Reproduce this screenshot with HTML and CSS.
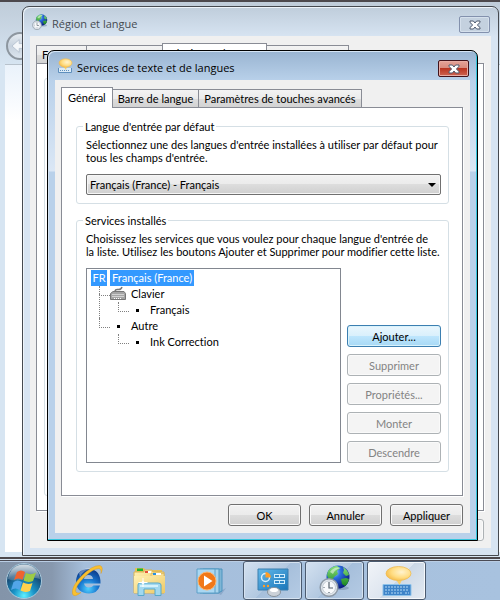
FILE: index.html
```html
<!DOCTYPE html>
<html lang="fr">
<head>
<meta charset="utf-8">
<title>Services de texte et de langues</title>
<link rel="stylesheet" href="styles.css">
</head>
<body>
<svg class="defs" width="0" height="0" aria-hidden="true">
  <defs>
    <radialGradient id="sea" cx="35%" cy="28%" r="75%"><stop offset="0" stop-color="#a9d8ff"/><stop offset=".35" stop-color="#2c6fe0"/><stop offset="1" stop-color="#0a1a7c"/></radialGradient>
    <linearGradient id="land" x1="0" y1="0" x2="0" y2="1"><stop offset="0" stop-color="#8be07c"/><stop offset="1" stop-color="#18851f"/></linearGradient>
    <radialGradient id="bubble" cx="62%" cy="40%" r="65%"><stop offset="0" stop-color="#fff3cf"/><stop offset=".6" stop-color="#ffdd83"/><stop offset="1" stop-color="#f6bd4c"/></radialGradient>
    <symbol id="globe-clock" viewBox="0 0 32 32">
      <ellipse cx="21" cy="23" rx="9" ry="2" fill="#6a86a8" opacity=".5"/>
      <circle cx="19" cy="12" r="11.5" fill="url(#sea)"/>
      <path d="M9 6q4-5 9-5l3 2-3 3 1 3-4 3-2 4-3-1-2-5zM24 2q5 3 6 8l-3 1-3-3 1-3zM22 14l5-1 3 1q-1 5-4 7l-3-2z" fill="url(#land)"/>
      <path d="M11 7q4-6 11-4-6 1-8 6z" fill="#fff" opacity=".5"/>
      <circle cx="10" cy="22.500" r="8.800" fill="#e3e8ed" stroke="#8d99a6" stroke-width="1.500"/>
      <circle cx="10" cy="22.500" r="6.500" fill="#f7f9fb" stroke="#c3ccd4"/>
      <path d="M10 17v6h4M10 27v1M4.500 22.500h1" fill="none" stroke="#55616d" stroke-width="1.200"/>
    </symbol>
    <symbol id="speech-keyboard" viewBox="0 0 32 32">
      <path d="M2 19.500h28v11H2z" fill="#3d83c8" stroke="#8fc3ea"/>
      <path d="M4 22h24M4 25h24M4 28h4M10 28h12M24 28h4" stroke="#b5dcf5" stroke-width="1.200" stroke-dasharray="2 1"/>
      <path d="M14 13h8l-3.500 7z" fill="#f7cd69"/>
      <ellipse cx="17.500" cy="8.500" rx="12.500" ry="7" fill="url(#bubble)" stroke="#eebb55" stroke-width=".8"/>
    </symbol>
    <symbol id="speech-keyboard-small" viewBox="0 0 16 16">
      <path d="M1.500 10v4.500h13V10" fill="#dcebf7" stroke="#5f8fbd"/>
      <path d="M3 12.500h10" stroke="#5f8fbd" stroke-dasharray="1 1"/>
      <path d="M6 8h4l-1 4z" fill="#f7cd69"/>
      <ellipse cx="8.500" cy="5" rx="6.500" ry="4.200" fill="url(#bubble)" stroke="#eebb55" stroke-width=".6"/>
    </symbol>
    <symbol id="cross" viewBox="0 0 12 10">
      <path d="M1 1h3.400L6 3 7.600 1H11v1.500L8.300 5 11 7.500V9H7.600L6 7 4.400 9H1V7.500L3.700 5 1 2.500z" fill="#fff" stroke="#4f5a6e" stroke-width="1"/>
    </symbol>
  </defs>
</svg>

<main class="desktop">
  <div class="window explorer">
    <div class="explorer-page"></div>
    <button class="nav-back" type="button" aria-label="Retour"><svg viewBox="0 0 30 30"><path d="M14 7L5 15l9 8v-5h10v-6H14z" fill="#f4f7fa" stroke="#b0bdcc"/></svg></button>
  </div>

  <section class="window region">
    <header class="titlebar">
      <svg class="title-icon"><use href="#globe-clock"/></svg>
      <h2 class="title">Région et langue</h2>
      <button class="close" type="button" aria-label="Fermer"><svg><use href="#cross"/></svg></button>
    </header>
    <div class="client">
      <div class="tabs">
        <button class="tab" type="button">Formats</button>
        <button class="tab" type="button">Emplacement</button>
        <button class="tab active" type="button">Claviers et langues</button>
        <button class="tab" type="button">Administration</button>
      </div>
      <div class="page"><div class="empty-group"></div></div>
      <div class="actions"><button class="button" type="button" disabled></button></div>
    </div>
  </section>

  <section class="window services">
    <header class="titlebar">
      <svg class="title-icon"><use href="#speech-keyboard-small"/></svg>
      <h1 class="title">Services de texte et de langues</h1>
      <button class="close" type="button" aria-label="Fermer"><svg><use href="#cross"/></svg></button>
    </header>
    <div class="client">
      <div class="tabs">
        <button class="tab active" type="button">Général</button>
        <button class="tab" type="button">Barre de langue</button>
        <button class="tab" type="button">Paramètres de touches avancés</button>
      </div>
      <div class="page">
        <fieldset class="group">
          <legend>Langue d'entrée par défaut</legend>
          <label class="hint" for="lang">Sélectionnez une des langues d'entrée installées à utiliser par défaut pour tous les champs d'entrée.</label>
          <div class="combo">
            <select id="lang"><option>Français (France) - Français</option></select>
          </div>
        </fieldset>
        <fieldset class="group">
          <legend>Services installés</legend>
          <p class="hint">Choisissez les services que vous voulez pour chaque langue d'entrée de la&nbsp;liste. Utilisez les boutons Ajouter et Supprimer pour modifier cette liste.</p>
          <div class="installed">
            <ul class="tree">
              <li>
                <div class="node selected"><span class="badge">FR</span><span class="name">Français (France)</span></div>
                <ul>
                  <li>
                    <div class="node">
                      <svg class="glyph" viewBox="0 0 16 16"><path d="M5 6q0-3 3-2.500T12 1" fill="none" stroke="#777" stroke-width="1.500"/><path d="M3 5.500h11l1.500 2v6h-15v-6z" fill="#a5a5a5" stroke="#777"/><path d="M2.500 8.500h11M2.500 10.500h11M4 12.500h8" stroke="#fff" stroke-dasharray="1 1"/></svg>
                      <span class="name">Clavier</span>
                    </div>
                    <ul><li><div class="node"><span class="glyph dot"></span><span class="name">Français</span></div></li></ul>
                  </li>
                  <li>
                    <div class="node"><span class="glyph dot"></span><span class="name">Autre</span></div>
                    <ul><li><div class="node"><span class="glyph dot"></span><span class="name">Ink Correction</span></div></li></ul>
                  </li>
                </ul>
              </li>
            </ul>
            <div class="commands">
              <button class="button hot" type="button">Ajouter...</button>
              <button class="button" type="button" disabled>Supprimer</button>
              <button class="button" type="button" disabled>Propriétés...</button>
              <button class="button" type="button" disabled>Monter</button>
              <button class="button" type="button" disabled>Descendre</button>
            </div>
          </div>
        </fieldset>
      </div>
      <div class="actions">
        <button class="button" type="button">OK</button>
        <button class="button" type="button">Annuler</button>
        <button class="button" type="button">Appliquer</button>
      </div>
    </div>
  </section>
</main>

<nav class="taskbar">
  <button class="start" type="button" aria-label="Démarrer">
    <svg viewBox="0 0 38 38">
      <defs>
        <radialGradient id="orb" cx="50%" cy="92%" r="85%"><stop offset="0" stop-color="#5ff0ff"/><stop offset=".35" stop-color="#1a94c8"/><stop offset=".75" stop-color="#174d78"/><stop offset="1" stop-color="#4e7390"/></radialGradient>
        <linearGradient id="shine" x1="0" y1="0" x2="0" y2="1"><stop offset="0" stop-color="#fff" stop-opacity=".75"/><stop offset="1" stop-color="#fff" stop-opacity=".15"/></linearGradient>
      </defs>
      <circle cx="19" cy="19" r="17.500" fill="url(#orb)" stroke="#a9c9dc"/>
      <path d="M3 17Q5 3 19 2.500 33 3 35 17q-8-3-16 0-9 3-16 0z" fill="url(#shine)"/>
      <path d="M12 10q4-3 8 0l-2.500 8q-4-3-8.500 0z" fill="#ee6430"/>
      <path d="M21 11q5 2.500 10-.5L28 19q-5 2-9.500-.500z" fill="#9ccb45"/>
      <path d="M8.500 20q4-3 8.500 0l-2.500 8q-4-3-8.500 0z" fill="#52a5e8"/>
      <path d="M18 20.500q5 2.500 9.500.5L25 29q-5 2-9.500-.500z" fill="#ffd14d"/>
    </svg>
  </button>
  <button class="task" type="button" aria-label="Internet Explorer">
    <svg viewBox="0 0 32 32">
      <defs><radialGradient id="ie" cx="50%" cy="80%" r="75%"><stop offset="0" stop-color="#4fd0ff"/><stop offset=".5" stop-color="#1a78d0"/><stop offset="1" stop-color="#0b3f91"/></radialGradient></defs>
      <path fill="url(#ie)" fill-rule="evenodd" d="M17 4C26 4 30 10 29.500 18.500H13q1 4 5 4 3 0 4.500-2h6.500Q26.500 28.500 18 28.500 5.500 28 5 16.500 5.500 4.500 17 4zM13 14h9q-.5-4-4.500-4T13 14z"/>
      <path d="M8 8Q14 1.500 21 4q-8 0-12 8z" fill="#fff" opacity=".35"/>
      <path d="M10 27.500Q3 33 1.500 29 0 22 10 11.500 21 0 29 .5q4 1.500 1 8 .5-5-2.500-5-6 .5-14 8.500Q4.500 21 4.500 26q.5 3 5.500 1.500z" fill="#f9c02f" stroke="#d99518" stroke-width=".4"/>
    </svg>
  </button>
  <button class="task" type="button" aria-label="Explorateur Windows">
    <svg viewBox="0 0 32 32">
      <defs><linearGradient id="folder" x1="0" y1="0" x2="1" y2="1"><stop offset="0" stop-color="#fff1b4"/><stop offset="1" stop-color="#eec864"/></linearGradient></defs>
      <path d="M2 3h9l1.500 2H29v22H2z" fill="#e6bf5d"/>
      <path d="M4 3.500h6v2.500H4z" fill="#1db52c"/>
      <path d="M1 7h10V5h8l1 2h11v21H1z" fill="url(#folder)" stroke="#d9b357"/>
      <path d="M12 6h6v2h-6z" fill="#fff"/><path d="M12 6h3v2h-3z" fill="#e5523b"/>
      <path d="M18 8.500h13V28H18z" fill="#f6dc90" stroke="#dab65c" stroke-width=".7"/><path d="M20 8h8v2h-8z" fill="#fff"/><path d="M20 8h3v2h-3z" fill="#268fe2"/>
      <path d="M1 11h31v17H1z" fill="url(#folder)"/>
      <path d="M5 30.500V20q0-2 2-2h18q3 0 3 2v10.500h-6V24H11v6.500z" fill="#a2d8ee" stroke="#57a8cc"/>
      <path d="M7 20h18v2H7z" fill="#d4f1fb"/>
      <path d="M10 13v9M5.500 17.500h9" stroke="#fff"/><circle cx="10" cy="17.500" r="1.500" fill="#fff"/>
    </svg>
  </button>
  <button class="task" type="button" aria-label="Lecteur Windows Media">
    <svg viewBox="0 0 32 32">
      <path d="M22 28l9-5-5 7z" fill="#6f92b8" opacity=".5"/>
      <path d="M8 4h19v22l-4 2H8z" fill="#7eb5d5" stroke="#4c94bf"/><path d="M5 4h19v24H5z" fill="#a8d4ec" stroke="#5599c2"/>
      <path d="M2 4h18v24H2z" fill="#a9d7f2" stroke="#5d9fc7"/>
      <circle cx="12" cy="16" r="9" fill="#f07818" stroke="#ffb46c"/><path d="M9 10.500l8.500 5.500L9 21.500z" fill="#fff"/>
    </svg>
  </button>
  <button class="task open" type="button" aria-label="Panneau de configuration">
    <svg viewBox="0 0 32 32">
      <defs><linearGradient id="panel" x1="0" y1="0" x2="1" y2="1"><stop offset="0" stop-color="#64b9ea"/><stop offset="1" stop-color="#1976ba"/></linearGradient></defs>
      <path d="M1 4h30v21H1z" fill="url(#panel)" stroke="#3a7eae"/>
      <circle cx="8.500" cy="12.500" r="4" fill="none" stroke="#d9f0fc" stroke-width="1.500"/><path d="M8.500 12.500V7q5 .5 5.500 5.500z" fill="#ff9d26"/>
      <path d="M17 9h11v4H17zM17 15h11v4H17z" fill="#d1edfb"/><path d="M18 10h4v2h-4zM23 10h4v2h-4zM18 16h4v2h-4zM23 16h4v2h-4z" fill="#348ac7"/>
      <circle cx="7" cy="21" r="1.200" fill="#ff9d26"/><circle cx="11" cy="21" r="1.200" fill="#ff9d26"/>
      <ellipse cx="17" cy="27" rx="6.500" ry="4.500" fill="#cbd1d8" stroke="#87919b"/><ellipse cx="17" cy="25" rx="4" ry="2" fill="#fff"/>
    </svg>
  </button>
  <button class="task open" type="button" aria-label="Région et langue"><svg><use href="#globe-clock"/></svg></button>
  <button class="task open current" type="button" aria-label="Services de texte et de langues"><svg><use href="#speech-keyboard"/></svg></button>
</nav>
</body>
</html>
```
FILE: styles.css
```css
* { box-sizing: border-box; }

body {
  margin: 0;
  min-height: 100vh;
  display: flex;
  flex-direction: column;
  background: #d7e5f2;
  color: #000;
  font: 11px/13px Lato, "Liberation Sans", sans-serif;
  font-variant-ligatures: none;
}

button, select { font: inherit; font-variant-ligatures: none; color: inherit; margin: 0; padding: 0; }
ul { list-style: none; margin: 0; padding: 0; }
.defs { position: absolute; }

/* Desktop and its windows */
.desktop {
  position: relative;
  flex: 1;
  display: grid;
  overflow: hidden;
}

.window { border: 1px solid #45494f; }

.explorer {
  position: absolute;
  inset: 0 -8px 1px -1px;
  border-width: 2px 1px;
  border-color: #4c484c;
  background: linear-gradient(#bfccd9, #d7e5f2 64px);
}

.explorer-page {
  position: absolute;
  inset: 62px 6px 5px 5px;
  border-top: 1px solid #b8c2cc;
  background: linear-gradient(#eaf2fb, #fff 56px);
}

.nav-back {
  position: absolute;
  top: 30px;
  left: 6px;
  width: 28px;
  height: 28px;
  border: 2px solid #8d969f;
  border-radius: 50%;
  background: linear-gradient(#e5ebf1, #c7d2de 50%, #dce5ee);
}
.nav-back svg { display: block; width: 24px; height: 24px; }

.region {
  position: absolute;
  inset: 6px 1px 4px 22px;
  display: flex;
  flex-direction: column;
  border-radius: 7px 7px 0 0;
  background: linear-gradient(#bfcddb, #d7e4f2 30px);
  box-shadow: inset 1px 1px #eef4fa;
}

.services {
  position: relative;
  margin: 50px 22px 18px 47px;
  border-color: #000;
  border-radius: 7px 7px 0 0;
  background: linear-gradient(#99b4d1, #b9d1ea 30px, #dbe7f5 120px, #b9d1ea 121px);
  box-shadow: inset -1px -1px #35c5dc, inset 1px 1px #d5e5f5;
  align-self: start;
}

.titlebar {
  height: 29px;
  padding: 0 8px 0 9px;
  display: flex;
  align-items: center;
  gap: 4px;
}
.title-icon { width: 16px; height: 16px; }
.title {
  flex: 1;
  margin: 0;
  padding-top: 5px;
  font: 11px/16px "Open Sans", "Noto Sans", sans-serif;
}
.region .title { color: #454b52; }

.close {
  width: 31px;
  height: 17px;
  display: grid;
  place-items: center;
  align-self: end;
  margin-bottom: 3px;
  border: 1px solid #8391ad;
  border-radius: 2px;
  background: #c4d1df;
  box-shadow: inset 0 0 0 1px #d5e0ec;
}
.close svg { width: 12px; height: 10px; }
.services .close {
  border-color: #42131b;
  background: linear-gradient(#e5a398, #d88a7d 48%, #ba3521 50%, #cd6552);
  box-shadow: inset 0 0 0 1px #e7aca3;
}

.client {
  margin: 0 7px 7px;
  padding: 7px 7px 7px 6px;
  background: #f0f0f0;
}
.region .client { flex: 1; display: flex; flex-direction: column; }

/* Tabs */
.tabs {
  display: flex;
  align-items: flex-end;
  height: 20px;
}
.tab {
  height: 18px;
  padding: 0 5px;
  border: 1px solid #898c95;
  border-bottom: 0;
  background: linear-gradient(#f3f3f3, #ebebeb 50%, #dddddd 51%, #d3d3d3);
  white-space: nowrap;
}
.tab + .tab { margin-left: -1px; }
.tab.active {
  position: relative;
  height: 21px;
  margin-bottom: -1px;
  padding: 0 6px 2px;
  background: #fff;
}

.page {
  padding: 12px 13px 23px 14px;
  border: 1px solid #898c95;
  background: #fff;
  box-shadow: 1px 1px #fff;
}
.region .page { flex: 1; padding: 14px 7px; }
.empty-group { height: 100%; border: 1px solid #d5dfe5; border-radius: 3px; }

/* Group boxes */
.group {
  min-width: 0;
  margin: 0;
  padding: 5px 7px 8px 9px;
  border: 1px solid #d5dfe5;
  border-radius: 3px;
}
.group + .group { margin-top: 10px; }
.group legend { margin-left: -3px; padding: 0 2px; }
.hint { display: block; margin: 0 0 10px; }

.combo { position: relative; }
.combo::after {
  content: "";
  position: absolute;
  top: 9px;
  right: 5px;
  border: 4px solid transparent;
  border-top-color: #000;
  border-bottom: 0;
  pointer-events: none;
}
.combo select {
  display: block;
  width: 100%;
  height: 21px;
  padding: 0 16px 0 3px;
  appearance: none;
  border: 1px solid #707070;
  border-radius: 2px;
  background: linear-gradient(#f2f2f2, #ebebeb 49%, #dddddd 50%, #cfcfcf);
  box-shadow: inset 0 0 0 1px #f6f6f6;
}

.installed { display: flex; gap: 6px; }

.tree {
  flex: 1;
  min-height: 195px;
  padding: 1px 4px;
  border: 1px solid #828790;
  background: #fff;
}
.tree ul { padding-left: 19px; }
.tree li { position: relative; }
.tree ul > li::before {
  content: "";
  position: absolute;
  top: 0;
  left: -11px;
  width: 10px;
  height: 9px;
  border: dotted #808080;
  border-width: 0 0 1px 1px;
}
.tree ul > li:not(:last-child)::after {
  content: "";
  position: absolute;
  top: 8px;
  bottom: 0;
  left: -11px;
  border-left: 1px dotted #808080;
}
.node { display: flex; gap: 3px; height: 16px; line-height: 16px; }
.name { padding: 0 2px; }
.glyph { width: 16px; height: 16px; }
.dot { display: grid; place-items: center; }
.dot::before { content: ""; width: 3px; height: 3px; background: #000; }
.badge { width: 16px; text-align: center; }
.selected .badge, .selected .name { background: #3399ff; color: #fff; }

/* Push buttons */
.button {
  height: 22px;
  border: 1px solid #707070;
  border-radius: 3px;
  background: linear-gradient(#f2f2f2, #ebebeb 49%, #dddddd 50%, #cfcfcf);
  box-shadow: inset 0 0 0 1px #fafafa;
}
.button.hot {
  border-color: #3c7fb1;
  background: linear-gradient(#eaf6fd, #d9f0fc 49%, #bee6fd 50%, #a7d9f5);
  box-shadow: inset 0 0 0 1px #d9f3fc;
}
.button:disabled {
  border-color: #adb2b5;
  background: #f4f4f4;
  color: #838383;
}
.commands {
  width: 94px;
  display: flex;
  flex-direction: column;
  justify-content: flex-end;
  gap: 7px;
}
.actions {
  display: flex;
  justify-content: flex-end;
  gap: 8px;
  padding-top: 8px;
}
.actions .button { width: 73px; }

/* Taskbar */
.taskbar {
  display: flex;
  gap: 3px;
  height: 40px;
  border-top: 1px solid #4a4b55;
  background: linear-gradient(90deg, #8394a9, #8798ae 52px, #a5bedb 84px, #a8c2df);
  box-shadow: inset 0 1px #b9cde4;
}
.start { width: 54px; padding-right: 6px; border: 0; background: none; }
.start svg { width: 38px; height: 38px; display: block; margin: auto; }
.task {
  width: 59px;
  display: grid;
  place-items: center;
  border: 1px solid transparent;
  border-radius: 3px;
  background: none;
}
.task svg { width: 32px; height: 32px; }
.task.open {
  border-color: #4b5b70;
  background: linear-gradient(135deg, #d4e1f0, #b2c8e0 50%, #a6bfdb 51%, #b5cbe4);
  box-shadow: inset 0 0 0 1px #d5e2f0;
}
.task.current {
  background: linear-gradient(135deg, #f1f4f8, #dde5ef 50%, #ccd8e6 51%, #e3eaf2);
  box-shadow: inset 0 0 0 1px #f5f8fb;
}
```
